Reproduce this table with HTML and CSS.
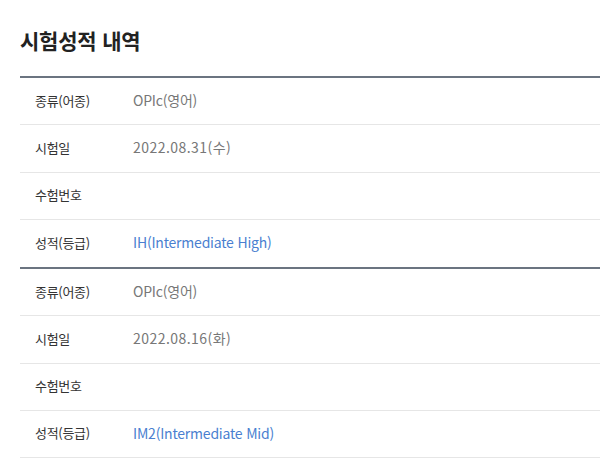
FILE: index.html
```html
<!DOCTYPE html>
<html lang="ko">
<head>
<meta charset="utf-8">
<link rel="stylesheet" href="styles.css">
</head>
<body>
<div class="page">
  <h2 class="title">시험성적 내역</h2>
  <div class="table">
    <div class="row"><div class="label">종류(어종)</div><div class="value">OPIc(영어)</div></div>
    <div class="row"><div class="label">시험일</div><div class="value date">2022.08.31(수)</div></div>
    <div class="row"><div class="label">수험번호</div><div class="value"></div></div>
    <div class="row"><div class="label">성적(등급)</div><div class="value blue">IH(Intermediate High)</div></div>
  </div>
  <div class="table">
    <div class="row"><div class="label">종류(어종)</div><div class="value">OPIc(영어)</div></div>
    <div class="row"><div class="label">시험일</div><div class="value date">2022.08.16(화)</div></div>
    <div class="row"><div class="label">수험번호</div><div class="value"></div></div>
    <div class="row"><div class="label">성적(등급)</div><div class="value blue">IM2(Intermediate Mid)</div></div>
  </div>
</div>
</body>
</html>
```

FILE: styles.css
```css
html, body {
  margin: 0;
  padding: 0;
  background: #fff;
  font-family: "Noto Sans CJK KR", "Noto Sans", sans-serif;
}
.page {
  padding: 25px 0 0 20px;
  width: 600px;
  box-sizing: border-box;
}
.title {
  margin: 0 0 21px 0;
  font-size: 21px;
  font-weight: 700;
  color: #222;
  line-height: 30px;
  letter-spacing: -0.2px;
}
.table {
  border-top: 2px solid #6b7480;
}
.row {
  display: flex;
  align-items: center;
  height: 46.25px;
  border-bottom: 1px solid #e6e6e6;
}
.table .row:last-child {
  border-bottom: none;
  height: 47.25px;
}
.table:last-child .row:last-child {
  border-bottom: 1px solid #e6e6e6;
  height: 46.25px;
}
.label {
  width: 98px;
  padding-left: 15px;
  margin-top: -2px;
  font-size: 13px;
  color: #333;
  letter-spacing: -0.3px;
}
.value {
  margin-top: -2px;
  font-size: 14px;
  color: #777;
  letter-spacing: -0.2px;
}
.value.date {
  letter-spacing: 0.45px;
}
.value.blue {
  color: #4a7fd0;
}
```
